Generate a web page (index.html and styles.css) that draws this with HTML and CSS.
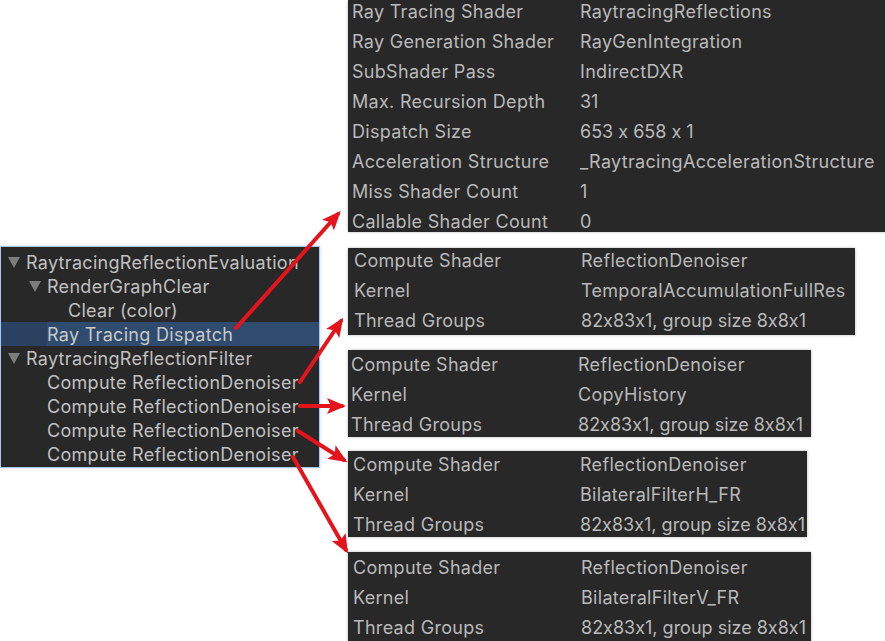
FILE: index.html
```html
<!DOCTYPE html>
<html>
<head>
<meta charset="utf-8">
<link rel="stylesheet" href="styles.css">
</head>
<body>
<div class="canvas">
  <div class="tree">
    <div class="row lvl0"><span class="tri"></span><span class="txt">RaytracingReflectionEvaluation</span></div>
    <div class="row lvl1"><span class="tri"></span><span class="txt">RenderGraphClear</span></div>
    <div class="row lvl2"><span class="txt">Clear (color)</span></div>
    <div class="row lvl1 sel"><span class="txt">Ray Tracing Dispatch</span></div>
    <div class="row lvl0"><span class="tri"></span><span class="txt">RaytracingReflectionFilter</span></div>
    <div class="row lvl1"><span class="txt">Compute ReflectionDenoiser</span></div>
    <div class="row lvl1"><span class="txt">Compute ReflectionDenoiser</span></div>
    <div class="row lvl1"><span class="txt">Compute ReflectionDenoiser</span></div>
    <div class="row lvl1"><span class="txt">Compute ReflectionDenoiser</span></div>
  </div>

  <div class="panel p1">
    <div class="prop"><span>Ray Tracing Shader</span><span>RaytracingReflections</span></div>
    <div class="prop"><span>Ray Generation Shader</span><span>RayGenIntegration</span></div>
    <div class="prop"><span>SubShader Pass</span><span>IndirectDXR</span></div>
    <div class="prop"><span>Max. Recursion Depth</span><span class="num">31</span></div>
    <div class="prop"><span>Dispatch Size</span><span class="num">653 x 658 x 1</span></div>
    <div class="prop"><span>Acceleration Structure</span><span>_RaytracingAccelerationStructure</span></div>
    <div class="prop"><span>Miss Shader Count</span><span class="num">1</span></div>
    <div class="prop"><span>Callable Shader Count</span><span class="num">0</span></div>
  </div>

  <div class="panel p2">
    <div class="prop"><span>Compute Shader</span><span>ReflectionDenoiser</span></div>
    <div class="prop"><span>Kernel</span><span>TemporalAccumulationFullRes</span></div>
    <div class="prop"><span>Thread Groups</span><span class="num">82x83x1, group size 8x8x1</span></div>
  </div>

  <div class="panel p3">
    <div class="prop"><span>Compute Shader</span><span>ReflectionDenoiser</span></div>
    <div class="prop"><span>Kernel</span><span>CopyHistory</span></div>
    <div class="prop"><span>Thread Groups</span><span class="num">82x83x1, group size 8x8x1</span></div>
  </div>

  <div class="panel p4">
    <div class="prop"><span>Compute Shader</span><span>ReflectionDenoiser</span></div>
    <div class="prop"><span>Kernel</span><span>BilateralFilterH_FR</span></div>
    <div class="prop"><span>Thread Groups</span><span class="num">82x83x1, group size 8x8x1</span></div>
  </div>

  <div class="panel p5">
    <div class="prop"><span>Compute Shader</span><span>ReflectionDenoiser</span></div>
    <div class="prop"><span>Kernel</span><span>BilateralFilterV_FR</span></div>
    <div class="prop"><span>Thread Groups</span><span class="num">82x83x1, group size 8x8x1</span></div>
  </div>

  <svg class="arrows" width="885" height="641" viewBox="0 0 885 641">
    <defs>
      <marker id="head" markerUnits="userSpaceOnUse" markerWidth="19" markerHeight="16" refX="15" refY="8" orient="auto">
        <path d="M0,0 L19,8 L0,16 L4,8 Z" fill="#e5141c"/>
      </marker>
    </defs>
    <g stroke="#e5141c" stroke-width="4" stroke-linecap="round" fill="none" marker-end="url(#head)">
      <line x1="236" y1="328" x2="338" y2="214"/>
      <line x1="300" y1="382" x2="341" y2="321"/>
      <line x1="300" y1="406" x2="342" y2="406"/>
      <line x1="298" y1="431" x2="344" y2="460"/>
      <line x1="293" y1="457" x2="346" y2="550"/>
    </g>
  </svg>
</div>
</body>
</html>
```

FILE: styles.css
```css
html, body {
  margin: 0;
  padding: 0;
  background: #ffffff;
}

.canvas {
  position: relative;
  width: 885px;
  height: 641px;
  overflow: hidden;
  font-family: "Inter", "Noto Sans", sans-serif;
  font-size: 18px;
  letter-spacing: 0.3px;
  font-feature-settings: "calt" 0;
}

/* hierarchy tree */
.tree {
  position: absolute;
  left: 1px;
  top: 247px;
  width: 318px;
  height: 220px;
  box-sizing: border-box;
  padding-top: 3px;
  background: #282828;
  overflow: hidden;
  box-shadow: 0 0 0 1px #a8c8f2, 0 0 4px 1px #c8dcf8;
}

.row {
  display: flex;
  align-items: center;
  height: 24px;
  color: #c0c0c0;
  white-space: nowrap;
}

.row.lvl0 { padding-left: 7px; }
.row.lvl1 { padding-left: 46px; }
.row.lvl1:has(.tri) { padding-left: 28px; }
.row.lvl2 { padding-left: 67px; }

.tri {
  flex: none;
  width: 0;
  height: 0;
  border-left: 6px solid transparent;
  border-right: 6px solid transparent;
  border-top: 11px solid #7c7c7c;
  margin-right: 6px;
  margin-top: 1px;
}

.row.sel {
  background: linear-gradient(to right, #2a4161 0, #2a4161 46px, #2f4b6e 46px);
  color: #c8c8c8;
}

/* property panels */
.panel {
  position: absolute;
  left: 348px;
  background: #282828;
  overflow: hidden;
  box-shadow: 0 0 3px rgba(0, 0, 0, 0.28);
  color: #b9b9b9;
  --pad: 4px;
  --val: 232px;
  --off: 0px;
}

.prop {
  display: grid;
  grid-template-columns: calc(var(--val) - var(--pad)) auto;
  height: 30px;
  box-sizing: border-box;
  padding-left: var(--pad);
  padding-top: var(--off);
  line-height: 24px;
  white-space: nowrap;
}

.num {
  letter-spacing: 0;
}

.p1 { top: 0; width: 545px; height: 232px; --pad: 4px; --val: 232px; --off: 0px; }
.p2 { top: 248px; width: 507px; height: 87px; --pad: 6px; --val: 233px; --off: 1px; }
.p3 { top: 350px; width: 463px; height: 87px; --pad: 3px; --val: 230px; --off: 3px; }
.p4 { top: 451px; width: 459px; height: 86px; --pad: 5px; --val: 232px; --off: 2px; }
.p5 { top: 552px; width: 463px; height: 95px; --pad: 5px; --val: 233px; --off: 4px; }

.arrows {
  position: absolute;
  left: 0;
  top: 0;
  pointer-events: none;
}
```
